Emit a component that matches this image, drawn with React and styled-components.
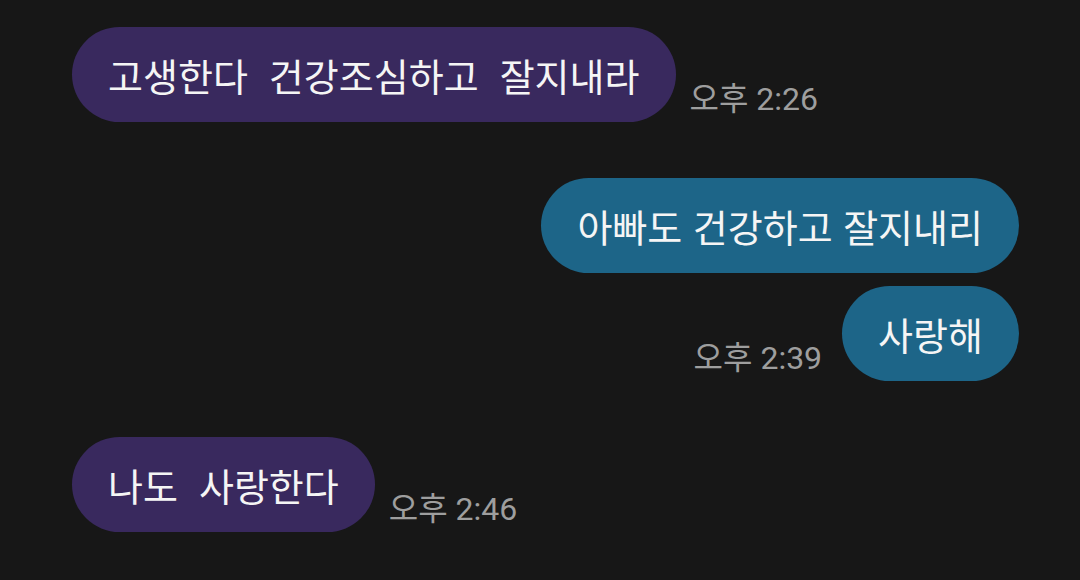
import React from 'react';
import styled, { createGlobalStyle } from 'styled-components';

const GlobalStyle = createGlobalStyle`
  html, body {
    margin: 0;
    padding: 0;
    background: #171717;
  }
  body {
    font-family: "Noto Sans CJK KR", "Noto Sans", sans-serif;
  }
`;

const messages = [
  {
    from: 'them',
    items: [{ text: '고생한다  건강조심하고  잘지내라', time: '오후 2:26' }],
  },
  {
    from: 'me',
    items: [
      { text: '아빠도 건강하고 잘지내리' },
      { text: '사랑해', time: '오후 2:39' },
    ],
  },
  {
    from: 'them',
    items: [{ text: '나도  사랑한다', time: '오후 2:46' }],
  },
];

function App() {
  return (
    <>
      <GlobalStyle />
      <StScreen>
        {messages.map((group, gi) => (
          <StGroup key={gi}>
            {group.items.map((msg, i) => (
              <StRow key={i} mine={group.from === 'me' ? 1 : 0}>
                <StBubble mine={group.from === 'me' ? 1 : 0}>{msg.text}</StBubble>
                {msg.time && <StTime>{msg.time}</StTime>}
              </StRow>
            ))}
          </StGroup>
        ))}
      </StScreen>
    </>
  );
}

const StScreen = styled.div`
  width: 1080px;
  height: 580px;
  box-sizing: border-box;
  padding: 27px 61px 0 72px;
  background: #171717;
  display: flex;
  flex-direction: column;
  gap: 56px;
  overflow: hidden;
`;

const StGroup = styled.div`
  display: flex;
  flex-direction: column;
  gap: 13px;
`;

const StRow = styled.div`
  display: flex;
  align-items: flex-end;
  gap: ${(props) => (props.mine ? '20px' : '14px')};
  flex-direction: ${(props) => (props.mine ? 'row-reverse' : 'row')};
`;

const StBubble = styled.div`
  height: 95px;
  box-sizing: border-box;
  padding: 0 36px;
  display: flex;
  align-items: center;
  border-radius: 48px;
  background: ${(props) => (props.mine ? '#1d6588' : '#39295e')};
  color: #f5f5f5;
  font-size: 38px;
  word-spacing: 2px;
  white-space: pre;
`;

const StTime = styled.div`
  font-family: Roboto, "Noto Sans CJK KR", sans-serif;
  font-size: 32px;
  line-height: 1;
  color: #9e9e9e;
  margin-bottom: 7px;
  white-space: nowrap;
`;

export default App;
